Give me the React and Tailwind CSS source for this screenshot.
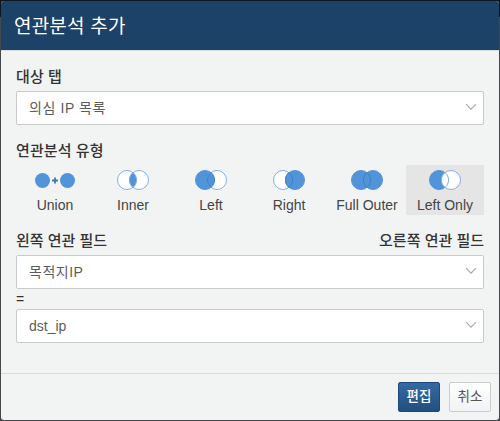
import { useState } from 'react';
import clsx from 'clsx';

const BLUE = '#5294d9';
const LINE = '#82afe0';
const OVERLAP = '#437fbe';

// Lens shared by the two circles
const LENS = 'M16 2.6 A9.5 9.5 0 0 1 16 17.4 A9.5 9.5 0 0 1 16 2.6 Z';

function UnionIcon() {
  return (
    <svg width="40" height="20" viewBox="0 0 40 20">
      <circle cx="7.5" cy="10.5" r="7.5" fill={BLUE} />
      <circle cx="32.5" cy="10.5" r="7.5" fill={BLUE} />
      <path d="M20 7.5v6M17 10.5h6" stroke="#3f78b5" strokeWidth="1.8" />
    </svg>
  );
}

function VennIcon({ left, right, lens, lensStroke }) {
  return (
    <svg width="32" height="20" viewBox="0 0 32 20">
      <circle cx="10" cy="10" r="9.5" fill={left} stroke={left === BLUE ? BLUE : LINE} />
      <circle cx="22" cy="10" r="9.5" fill={right} stroke={right === BLUE ? BLUE : LINE} />
      <path d={LENS} fill={lens} stroke={lensStroke} />
    </svg>
  );
}

const joinTypes = [
  { id: 'union', label: 'Union', icon: <UnionIcon /> },
  { id: 'inner', label: 'Inner', icon: <VennIcon left="#fff" right="#fff" lens={BLUE} lensStroke={LINE} /> },
  { id: 'left', label: 'Left', icon: <VennIcon left={BLUE} right="#fff" lens={BLUE} lensStroke={OVERLAP} /> },
  { id: 'right', label: 'Right', icon: <VennIcon left="#fff" right={BLUE} lens={BLUE} lensStroke={OVERLAP} /> },
  { id: 'full', label: 'Full Outer', icon: <VennIcon left={BLUE} right={BLUE} lens={BLUE} lensStroke={OVERLAP} /> },
  { id: 'leftOnly', label: 'Left Only', icon: <VennIcon left={BLUE} right="#fff" lens="#fff" lensStroke={LINE} /> },
];

function SelectBox({ value, className }) {
  return (
    <button
      type="button"
      className="flex h-[34px] w-full items-center justify-between rounded-xs border border-[#c8cacb] bg-white pr-[6px] pl-3 text-[14px] text-[#5c5c5c]"
    >
      <span className={className}>{value}</span>
      <svg width="12" height="8" viewBox="0 0 12 8" className="mb-0.5" fill="none">
        <path d="M1 1.2 L6 6.2 L11 1.2" stroke="#aaa" strokeWidth="1.2" />
      </svg>
    </button>
  );
}

export default function App() {
  const [joinType, setJoinType] = useState('leftOnly');

  return (
    <div className="h-[421px] w-[500px] bg-linear-to-b from-[#10161e] from-[17px] to-[#45474a] to-[17px] p-px font-['Liberation_Sans','Noto_Sans_CJK_KR',sans-serif]">
      <div className="flex h-full flex-col overflow-hidden rounded-[3px] bg-[#f2f4f4] text-[#333]">
        {/* Header */}
        <div className="flex h-[50px] shrink-0 items-center border-b border-[#dadde0] bg-[#1d4268] bg-clip-padding pt-0.5 pl-[13px]">
          <h1 className="text-[19px] leading-none tracking-[0.2px] text-white">연관분석 추가</h1>
        </div>

        {/* Body */}
        <div className="flex flex-1 flex-col px-[15px] pt-[15px]">
          <label className="h-[25px] pt-px text-[15px] leading-[20px] font-medium tracking-[0.1px]">대상 탭</label>
          <SelectBox value="의심 IP 목록" className="tracking-[0.6px]" />

          <label className="mt-[15px] h-[25px] pt-px text-[15px] leading-[20px] font-medium tracking-[0.1px]">
            연관분석 유형
          </label>
          <div className="grid grid-cols-6">
            {joinTypes.map((type) => (
              <button
                key={type.id}
                type="button"
                onClick={() => setJoinType(type.id)}
                className={clsx(
                  'flex h-[50px] flex-col items-center pt-[5px] text-[14px] leading-[20px] whitespace-nowrap text-[#444]',
                  joinType === type.id && 'bg-[#e5e5e5]'
                )}
              >
                {type.icon}
                <span className="mt-[5px]">{type.label}</span>
              </button>
            ))}
          </div>

          <div className="mt-[15px] flex h-[25px] justify-between pt-px text-[15px] leading-[20px] font-medium">
            <span>왼쪽 연관 필드</span>
            <span>오른쪽 연관 필드</span>
          </div>
          <SelectBox value="목적지IP" className="tracking-[0.5px]" />
          <div className="h-5 text-[14px] leading-5">=</div>
          <SelectBox value="dst_ip" />
        </div>

        {/* Footer */}
        <div className="flex h-[47px] shrink-0 justify-end gap-[9px] border-t border-[#d9dcdc] pt-2 pr-2">
          <button
            type="button"
            className="h-[30px] w-[42px] rounded-xs border border-[#1f4a78] bg-linear-to-b from-[#346aa5] to-[#234f7e] text-[13.5px] leading-none font-medium text-white"
          >
            편집
          </button>
          <button
            type="button"
            className="h-[30px] w-[42px] rounded-xs border border-[#ccc] bg-linear-to-b from-white to-[#f0f2f5] text-[13.5px] leading-none text-[#555]"
          >
            취소
          </button>
        </div>
      </div>
    </div>
  );
}
